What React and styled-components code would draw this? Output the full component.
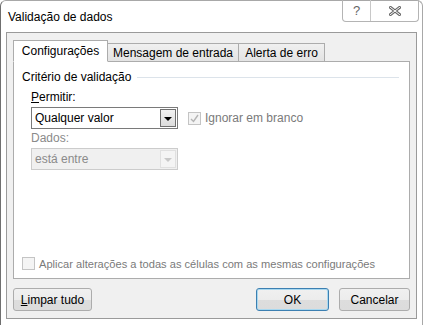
import React from 'react'
import styled, { createGlobalStyle } from 'styled-components'

const Global = createGlobalStyle`
  html, body {
    margin: 0;
    padding: 0;
    background: #ffffff;
  }
  body {
    font-family: 'Liberation Sans', Arial, sans-serif;
    font-size: 12px;
    color: #000;
  }
`

const Frame = styled.div`
  width: 423px;
  height: 325px;
  box-sizing: border-box;
  background: #ffffff;
  border-left: 1px solid #6f6f6f;
  border-right: 1px solid #a8a8a8;
  border-top: 1px solid #a8a8a8;
  border-top-right-radius: 6px;
  border-top-left-radius: 6px;
  display: flex;
  flex-direction: column;
  padding: 0 5px 6px 5px;
`

const TitleBar = styled.div`
  height: 31px;
  display: flex;
  align-items: flex-start;
  justify-content: space-between;
`

const Title = styled.div`
  padding: 9px 0 0 2px;
  font-size: 12px;
  color: #000;
`

const Caption = styled.div`
  display: flex;
  margin-right: -2px;
  margin-top: -1px;
  height: 21px;
  border: 1px solid #b4b4b4;
  border-top: none;
  border-radius: 0 0 4px 4px;
`

const CaptionButton = styled.div`
  width: ${(p) => p.w}px;
  display: flex;
  align-items: center;
  justify-content: center;
  color: #666;
  font-size: 13px;
  border-left: ${(p) => (p.first ? 'none' : '1px solid #c8c8c8')};
`

const Client = styled.div`
  flex: 1;
  background: #f0f0f0;
  border: 1px solid #9a9a9a;
  padding: 7px 6px 7px 6px;
  display: flex;
  flex-direction: column;
`

const TabStrip = styled.div`
  display: flex;
  align-items: flex-end;
  height: 21px;
  position: relative;
  z-index: 1;
`

const Tab = styled.div`
  box-sizing: border-box;
  height: ${(p) => (p.active ? 22 : 18)}px;
  padding: 0 ${(p) => (p.active ? 8 : 7)}px;
  display: flex;
  align-items: center;
  justify-content: center;
  width: ${(p) => p.w}px;
  border: 1px solid #acacac;
  border-bottom: ${(p) => (p.active ? '1px solid #fff' : 'none')};
  margin-left: ${(p) => (p.first ? 0 : -1)}px;
  margin-bottom: ${(p) => (p.active ? -1 : 0)}px;
  background: ${(p) =>
    p.active ? '#ffffff' : 'linear-gradient(#f0f0f0, #e3e3e3)'};
  padding-top: ${(p) => (p.active ? 0 : 1)}px;
  white-space: nowrap;
`

const Panel = styled.div`
  flex: 1;
  background: #ffffff;
  border: 1px solid #acacac;
  padding: 7px 8px 8px 8px;
  display: flex;
  flex-direction: column;
`

const GroupTitle = styled.div`
  display: flex;
  align-items: center;
  gap: 6px;
  height: 16px;
  &::after {
    content: '';
    flex: 1;
    height: 1px;
    background: #dce3ea;
    margin-right: 2px;
  }
`

const Fields = styled.div`
  padding: 5px 0 0 9px;
  display: flex;
  flex-direction: column;
`

const FieldLabel = styled.div`
  height: 15px;
  line-height: 15px;
  margin-bottom: 2px;
  color: ${(p) => (p.disabled ? '#8a8a8a' : '#000')};
`

const Row = styled.div`
  display: flex;
  align-items: center;
  gap: 10px;
  margin-bottom: 2px;
`

const Select = styled.div`
  box-sizing: border-box;
  width: 147px;
  height: 22px;
  display: flex;
  align-items: stretch;
  border: 1px solid ${(p) => (p.disabled ? '#cccccc' : '#7a7a7a')};
  background: ${(p) => (p.disabled ? '#f0f0f0' : '#ffffff')};
  color: ${(p) => (p.disabled ? '#8a8a8a' : '#000')};
`

const SelectValue = styled.div`
  flex: 1;
  padding-left: 3px;
  display: flex;
  align-items: center;
`

const Arrow = styled.div`
  width: 16px;
  margin: 1px;
  box-sizing: border-box;
  border: 1px solid ${(p) => (p.disabled ? '#e0e0e0' : '#707070')};
  background: ${(p) =>
    p.disabled ? '#f4f4f4' : 'linear-gradient(#f2f2f2, #dcdcdc)'};
  display: flex;
  align-items: center;
  justify-content: center;
  &::before {
    content: '';
    border-left: 4px solid transparent;
    border-right: 4px solid transparent;
    border-top: 4px solid ${(p) => (p.disabled ? '#c8c8c8' : '#000')};
    margin-top: 1px;
  }
`

const Check = styled.div`
  box-sizing: border-box;
  width: 13px;
  height: 13px;
  flex: none;
  border: 1px solid #c4c4c4;
  background: #f4f4f4;
  display: flex;
  align-items: center;
  justify-content: center;
`

const CheckLabel = styled.label`
  display: flex;
  align-items: center;
  gap: 4px;
  color: #7a7a7a;
  white-space: nowrap;
  font-size: ${(p) => p.size || 12}px;
`

const Spacer = styled.div`
  flex: 1;
`

const Footer = styled.div`
  display: flex;
  align-items: center;
  padding-top: 9px;
`

const Button = styled.div`
  box-sizing: border-box;
  width: ${(p) => p.w}px;
  height: 23px;
  display: flex;
  align-items: center;
  justify-content: center;
  border: 1px solid ${(p) => (p.primary ? '#3c7fb1' : '#acacac')};
  box-shadow: ${(p) => (p.primary ? 'inset 0 0 0 1px #a8d8f0' : 'none')};
  border-radius: 3px;
  background: linear-gradient(#f0f0f0 0%, #ececec 50%, #dddddd 51%, #dcdcdc 100%);
  margin-left: ${(p) => p.ml || 0}px;
`

const CheckMark = () => (
  <svg width="9" height="9" viewBox="0 0 9 9">
    <path d="M1 5 L3.5 7.5 L8 1" fill="none" stroke="#b4b4b4" strokeWidth="1.4" />
  </svg>
)

const CloseGlyph = () => (
  <svg width="12" height="10" viewBox="0 0 12 10">
    <path d="M1.5 1.5 L10.5 8.5 M10.5 1.5 L1.5 8.5" stroke="#6a6a6a" strokeWidth="3" strokeLinecap="square" />
    <path d="M1.5 1.5 L10.5 8.5 M10.5 1.5 L1.5 8.5" stroke="#ffffff" strokeWidth="1" strokeLinecap="square" />
  </svg>
)

export default function App() {
  return (
    <>
      <Global />
      <Frame>
        <TitleBar>
          <Title>Validação de dados</Title>
          <Caption>
            <CaptionButton w={27} first>?</CaptionButton>
            <CaptionButton w={47}><CloseGlyph /></CaptionButton>
          </Caption>
        </TitleBar>
        <Client>
          <TabStrip>
            <Tab active first w={95}>Configurações</Tab>
            <Tab w={132}>Mensagem de entrada</Tab>
            <Tab w={87}>Alerta de erro</Tab>
          </TabStrip>
          <Panel>
            <GroupTitle>Critério de validação</GroupTitle>
            <Fields>
              <FieldLabel><u>P</u>ermitir:</FieldLabel>
              <Row>
                <Select>
                  <SelectValue>Qualquer valor</SelectValue>
                  <Arrow />
                </Select>
                <CheckLabel>
                  <Check><CheckMark /></Check>
                  Ignorar em branco
                </CheckLabel>
              </Row>
              <FieldLabel disabled>Dados:</FieldLabel>
              <Row>
                <Select disabled>
                  <SelectValue>está entre</SelectValue>
                  <Arrow disabled />
                </Select>
              </Row>
            </Fields>
            <Spacer />
            <CheckLabel size={11.1}>
              <Check />
              Aplicar alterações a todas as células com as mesmas configurações
            </CheckLabel>
          </Panel>
          <Footer>
            <Button w={79}><u>L</u>impar tudo</Button>
            <Spacer />
            <Button primary w={73}>OK</Button>
            <Button w={71} ml={10}>Cancelar</Button>
          </Footer>
        </Client>
      </Frame>
    </>
  )
}
